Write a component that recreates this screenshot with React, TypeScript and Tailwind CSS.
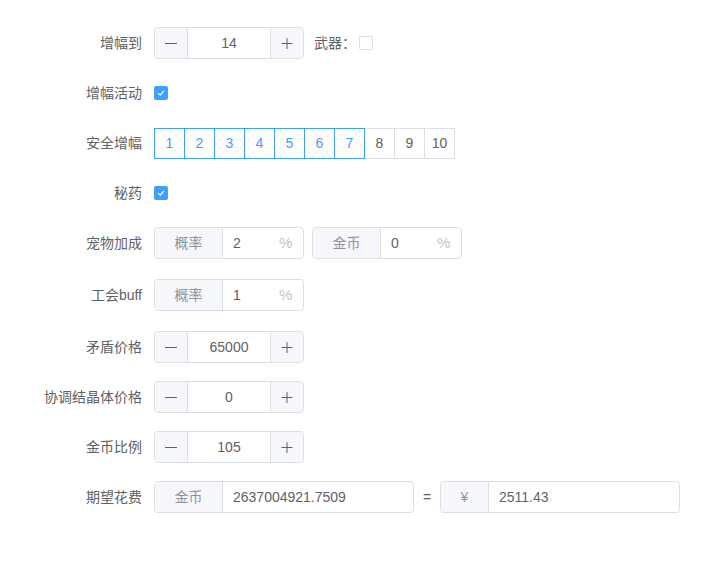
import React from "react";

const font = {
  fontFamily: '"Helvetica Neue", Helvetica, "Liberation Sans", "Noto Sans CJK SC", sans-serif',
};

function Row({ label, children, className = "mb-[18px]" }: { label: string; children: React.ReactNode; className?: string }) {
  return (
    <div className={`flex h-8 items-center ${className}`}>
      <div className="w-[154px] shrink-0 pr-3 text-right text-sm text-[#606266]">{label}</div>
      <div className="flex items-center">{children}</div>
    </div>
  );
}

function Minus() {
  return (
    <svg width="14" height="14" viewBox="0 0 14 14">
      <line x1="1" y1="7.5" x2="13" y2="7.5" stroke="#606266" strokeWidth="1" />
    </svg>
  );
}

function Plus() {
  return (
    <svg width="14" height="14" viewBox="0 0 14 14">
      <line x1="1.5" y1="7.5" x2="12.5" y2="7.5" stroke="#606266" strokeWidth="1" />
      <line x1="7" y1="2" x2="7" y2="13" stroke="#606266" strokeWidth="1" />
    </svg>
  );
}

function NumberInput({ value }: { value: string }) {
  return (
    <div className="flex h-8 w-[150px] overflow-hidden rounded border border-[#dcdfe6] bg-white">
      <div className="flex w-[33px] items-center justify-center border-r border-[#dcdfe6] bg-[#f5f7fa]">
        <Minus />
      </div>
      <div className="flex flex-1 items-center justify-center text-sm text-[#606266]">{value}</div>
      <div className="flex w-[33px] items-center justify-center border-l border-[#dcdfe6] bg-[#f5f7fa]">
        <Plus />
      </div>
    </div>
  );
}

function Checkbox({ checked }: { checked?: boolean }) {
  if (checked) {
    return (
      <span className="flex h-[14px] w-[14px] items-center justify-center rounded-[2px] bg-[#409eff]">
        <svg width="10" height="10" viewBox="0 0 10 10">
          <path d="M2 5.2 L4.2 7.2 L8 2.8" fill="none" stroke="#fff" strokeWidth="1.1" />
        </svg>
      </span>
    );
  }
  return <span className="block h-[14px] w-[14px] rounded-[2px] border border-[#dcdfe6] bg-white" />;
}

function PrependInput({
  prepend,
  value,
  suffix,
  width,
  prependWidth,
}: {
  prepend: string;
  value: string;
  suffix?: string;
  width: string;
  prependWidth: string;
}) {
  return (
    <div className={`flex h-8 overflow-hidden rounded border border-[#dcdfe6] bg-white ${width}`}>
      <div className={`flex items-center justify-center border-r border-[#dcdfe6] bg-[#f5f7fa] text-sm text-[#909399] ${prependWidth}`}>
        {prepend}
      </div>
      <div className="flex flex-1 items-center pl-[10px] text-sm text-[#606266]">{value}</div>
      {suffix && <div className="flex w-[24px] items-center text-[15px] text-[#c0c4cc]">{suffix}</div>}
    </div>
  );
}

export default function App() {
  const steps = [1, 2, 3, 4, 5, 6, 7, 8, 9, 10];
  return (
    <div className="h-[561px] w-[702px] bg-white pt-[27px]" style={font}>
      <Row label="增幅到">
        <NumberInput value="14" />
        <span className="ml-[10px] text-sm text-[#606266]">武器：</span>
        <span className="ml-[3px]">
          <Checkbox />
        </span>
      </Row>
      <Row label="增幅活动">
        <Checkbox checked />
      </Row>
      <Row label="安全增幅">
        <div className="flex">
          {steps.map((n, i) => (
            <div
              key={n}
              className={`flex h-[31px] w-[31px] items-center justify-center border text-sm ${i > 0 ? "-ml-px" : ""} ${
                n <= 7 ? "relative z-10 border-[#409eff] text-[#409eff]" : "border-[#dcdfe6] text-[#606266]"
              }`}
            >
              {n}
            </div>
          ))}
        </div>
      </Row>
      <Row label="秘药">
        <Checkbox checked />
      </Row>
      <Row label="宠物加成" className="mb-[20px]">
        <PrependInput prepend="概率" value="2" suffix="%" width="w-[150px]" prependWidth="w-[68px]" />
        <span className="ml-2">
          <PrependInput prepend="金币" value="0" suffix="%" width="w-[150px]" prependWidth="w-[68px]" />
        </span>
      </Row>
      <Row label="工会buff" className="mb-[20px]">
        <PrependInput prepend="概率" value="1" suffix="%" width="w-[150px]" prependWidth="w-[68px]" />
      </Row>
      <Row label="矛盾价格">
        <NumberInput value="65000" />
      </Row>
      <Row label="协调结晶体价格">
        <NumberInput value="0" />
      </Row>
      <Row label="金币比例">
        <NumberInput value="105" />
      </Row>
      <Row label="期望花费">
        <PrependInput prepend="金币" value="2637004921.7509" width="w-[260px]" prependWidth="w-[68px]" />
        <span className="w-[26px] text-center text-sm text-[#606266]">=</span>
        <PrependInput prepend="¥" value="2511.43" width="w-[240px]" prependWidth="w-[48px]" />
      </Row>
    </div>
  );
}
